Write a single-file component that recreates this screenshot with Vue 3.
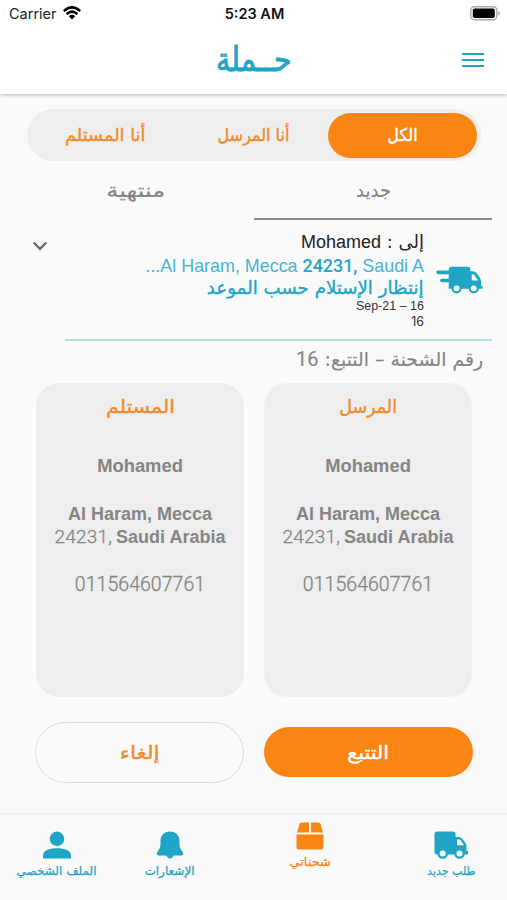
<script setup>
import { ref } from 'vue'

const filters = [
  { id: 'all', label: 'الكل' },
  { id: 'sender', label: 'أنا المرسل' },
  { id: 'receiver', label: 'أنا المستلم' },
]
const activeFilter = ref('all')

const tabs = [
  { id: 'new', label: 'جديد' },
  { id: 'done', label: 'منتهية' },
]
const activeTab = ref('new')

const parties = [
  { id: 'card-from', title: 'المرسل' },
  { id: 'card-to', title: 'المستلم' },
]
</script>

<template>
  <div class="screen">
    <header class="header">
      <div class="status">
        <div class="carrier">
          <span>Carrier</span>
          <svg class="wifi" viewBox="0 0 18 14">
            <path d="M0.8 5.2Q9-2.5 17.2 5.2M3.6 8.1Q9 3.2 14.4 8.1" fill="none" stroke="#000" stroke-width="2.5" />
            <path d="M5.9 10.2Q9 7.4 12.1 10.2L9 13.6Z" />
          </svg>
        </div>
        <span class="clock">5:23 AM</span>
        <svg class="battery" viewBox="0 0 30 15">
          <rect x="0.8" y="0.8" width="26" height="13" rx="3.5" fill="#fff" stroke="#aaa" stroke-width="1.4" />
          <rect x="2.8" y="2.6" width="22" height="9.4" rx="1.8" />
          <path d="M28.3 5Q30 5.4 30 7.3T28.3 9.7Z" fill="#aaa" />
        </svg>
      </div>
      <div class="brand-row">
        <h1 class="brand">حــملة</h1>
        <button class="menu" aria-label="القائمة"><i></i><i></i><i></i></button>
      </div>
    </header>

    <main class="content">
      <div class="filters">
        <button
          v-for="f in filters" :key="f.id" class="filter"
          :class="[f.id, { on: f.id === activeFilter }]" @click="activeFilter = f.id"
        ><span>{{ f.label }}</span></button>
      </div>

      <div class="tabs">
        <button
          v-for="t in tabs" :key="t.id" class="tab"
          :class="[t.id, { on: t.id === activeTab }]" @click="activeTab = t.id"
        ><span>{{ t.label }}</span></button>
      </div>

      <section class="shipment">
        <svg class="fast-truck" viewBox="0 0 48 30">
          <path d="M2 7.200H16M6 15.600H18" stroke="#1fa6c6" stroke-width="3.600" stroke-linecap="round" />
          <path d="M16 1.500H32.500Q35 1.500 35 4V6H38Q40 6 41.500 8L45 13Q46 15 46 17V21H47.500V24H13V4.500Q13 1.500 16 1.500Z" fill="#1fa6c6" />
          <path d="M36.500 9H38.500L43 15.500H36.500Z" fill="#fafafa" />
          <g fill="#1fa6c6"><circle cx="21" cy="23.500" r="5.200" /><circle cx="38.500" cy="23.500" r="5.200" /></g>
          <g fill="#fafafa"><circle cx="21" cy="23.500" r="3" /><circle cx="38.500" cy="23.500" r="3" /></g>
        </svg>
        <div class="info">
          <p class="recipient"><span>إلى : <b>Mohamed</b></span></p>
          <p class="address"><span>Al Haram, Mecca <b>24231,</b> Saudi A...</span></p>
          <p class="state"><span>إنتظار الإستلام حسب الموعد</span></p>
          <p class="date"><span>16 – Sep-21</span></p>
          <p class="num"><span>16</span></p>
        </div>
        <svg class="chevron" viewBox="0 0 16 10"><path d="M1.600 1.500L8 7.800L14.400 1.500" fill="none" stroke="#666" stroke-width="2.300" /></svg>
      </section>
      <hr class="rule">

      <h2 class="tracking"><span>رقم الشحنة – التتبع: <b>16</b></span></h2>

      <div class="cards">
        <article v-for="p in parties" :key="p.id" class="card" :class="p.id">
          <h3><span>{{ p.title }}</span></h3>
          <p class="name"><span>Mohamed</span></p>
          <p class="line1"><span>Al Haram, Mecca</span></p>
          <p class="line2" dir="ltr"><span class="digits zip">24231,</span><span class="country">Saudi Arabia</span></p>
          <p class="phone"><span class="digits">011564607761</span></p>
        </article>
      </div>

      <div class="actions">
        <button class="track"><span>التتبع</span></button>
        <button class="cancel"><span>إلغاء</span></button>
      </div>
    </main>

    <nav class="nav">
      <a class="item order">
        <svg viewBox="0 0 34 28">
          <path d="M3 .5H19Q21.500 .5 21.500 3V6H25Q27 6 28.300 7.700L31.500 12Q32.500 13.500 32.500 15.500V20H34V23.500H3Q.5 23.500 .5 21V3Q.5 .5 3 .5Z" fill="#1fa6c6" />
          <path d="M23 8.500H26L30 14.300H23Z" fill="#fafafa" />
          <g fill="#1fa6c6"><circle cx="8.700" cy="22.500" r="5.300" /><circle cx="25.500" cy="22.500" r="5.300" /></g>
          <g fill="#fafafa"><circle cx="8.700" cy="22.500" r="3" /><circle cx="25.500" cy="22.500" r="3" /></g>
        </svg>
        <span>طلب جديد</span>
      </a>
      <a class="item mine">
        <svg viewBox="0 0 28 28">
          <path d="M5.500 .5H13V10.500H1L3.500 2Q4 .5 5.500 .5ZM15 .5H22.500Q24 .5 24.500 2L27 10.500H15ZM.5 12.500H27.500V25Q27.500 27.500 25 27.500H3Q.5 27.500 .5 25Z" fill="#f98513" />
        </svg>
        <span>شحناتي</span>
      </a>
      <a class="item alerts">
        <svg viewBox="0 0 28 28">
          <path d="M14 .5C7.500 .5 4.500 5 4.500 10V14Q4.500 17 2 20L.8 22Q.5 24.500 2.500 24.500H10.200Q11.500 27.500 14 27.500T17.800 24.500H25.500Q27.500 24.500 27.200 22L26 20Q23.500 17 23.500 14V10C23.500 5 20.500 .5 14 .5Z" fill="#1fa6c6" />
        </svg>
        <span>الإشعارات</span>
      </a>
      <a class="item profile">
        <svg viewBox="0 0 28 28">
          <circle cx="14" cy="7.800" r="7.300" fill="#1fa6c6" />
          <path d="M0 27.500V24.500C0 19.500 6 17.300 14 17.300S28 19.500 28 24.500V27.500Z" fill="#1fa6c6" />
        </svg>
        <span>الملف الشخصي</span>
      </a>
    </nav>
  </div>
</template>

<style>
body { margin: 0; background: #fafafa; }
</style>

<style scoped>
.screen {
  width: 507px; height: 900px; box-sizing: border-box; overflow: hidden;
  display: flex; flex-direction: column; direction: rtl;
  background: #fafafa; color: #858585;
  font-family: "DejaVu Sans", sans-serif;
}
.screen * { box-sizing: border-box; }
button { border: 0; padding: 0; background: none; font: inherit; color: inherit; }
h1, h2, h3, p { margin: 0; font-weight: 400; white-space: nowrap; }
span { display: inline-block; white-space: nowrap; }

.header { height: 94px; background: #fff; box-shadow: 0 1px 4px rgba(0, 0, 0, .28); flex: none; }
.status {
  height: 27px; direction: ltr; display: grid; grid-template-columns: 1fr auto 1fr; align-items: center;
  padding: 0 7px 0 9px; font-family: Inter, sans-serif; font-size: 14.5px; color: #222;
}
.carrier { display: flex; align-items: center; gap: 6px; }
.wifi { width: 18px; height: 14px; margin-top: -2px; }
.clock { font-weight: 600; font-size: 14.5px; color: #111; }
.battery { width: 30px; height: 15px; justify-self: end; }
.brand-row { height: 66px; display: grid; grid-template-columns: 1fr auto 1fr; align-items: center; padding: 0 23px; }
.brand { grid-column: 2; font-size: 30px; line-height: 56px; color: #1fa6c6; -webkit-text-stroke: .8px; transform: scale(.95, 1.12); }
.menu { grid-column: 1; grid-row: 1; justify-self: start; width: 22px; display: flex; flex-direction: column; gap: 4px; }
.menu i { height: 2px; background: #1fa6c6; }

.content { flex: 1; min-height: 0; padding-top: 15px; }
.filters {
  width: 454px; height: 52px; margin-right: 26px; padding: 4px; border-radius: 26px; background: #eee;
  display: grid; grid-template-columns: 149px 149px 1fr; color: #f08a2c; font-size: 16px;
}
.filters, .state, .card h3, .actions { -webkit-text-stroke: .35px; }
.tabs, .tracking { -webkit-text-stroke: .15px; }
.filter { height: 45px; border-radius: 23px; }
.filter.on { background: #f98513; color: #fff; }
.filter span { transform: translateY(-1px) scaleY(1.1); }
.receiver span { transform: translateY(-1px) scale(1.11, 1.1); }

.tabs { height: 59px; margin: 0 15px; display: grid; grid-template-columns: 1fr 1fr; font-size: 17px; }
.tab { border-bottom: 2px solid transparent; }
.tab.on { border-color: #8b8b8b; }
.new span { transform: translateX(1px) scale(1.06, 1.1); }
.done span { transform: translateX(1px) scale(1.42, 1.15); }

.shipment { height: 119px; padding: 10px 24px 0 32px; display: flex; align-items: flex-start; }
.fast-truck { width: 47px; height: 30px; margin-top: 35px; margin-right: 0; flex: none; }
.info { flex: 1; padding-right: 12px; }
.info span { transform-origin: right center; }
.recipient { height: 24px; line-height: 24px; font-size: 18px; color: #222; }
.recipient b, .address, .date { font-family: "Liberation Sans", "DejaVu Sans", sans-serif; font-weight: 400; }
.address { height: 23px; line-height: 23px; font-size: 17.9px; color: #48b5d0; }
.address b { font-family: Roboto, sans-serif; font-weight: 500; color: #1fa6c6; }
.state { height: 22px; line-height: 22px; font-size: 17px; color: #1fa6c6; }
.state span { transform: scale(1.07, 1.08); }
.date, .num { height: 15px; line-height: 15px; font-size: 12.5px; color: #333; }
.num { font-family: Inter, sans-serif; }
.chevron { width: 16px; height: 10px; margin-top: 11px; flex: none; }
.rule { width: 427px; height: 2px; margin: 0 15px 0 0; border: 0; background: #b5e0e8; }

.tracking { height: 42px; line-height: 38px; padding-right: 24px; font-size: 18px; }
.tracking span { transform: scale(1.05, 1.06); transform-origin: right center; }
.tracking b { font-family: Roboto, sans-serif; font-weight: 400; font-size: 19px; }

.cards { display: grid; grid-template-columns: 208px 208px; gap: 20px; margin-right: 35px; }
.card { height: 314px; border-radius: 24px; background: #eee; padding-top: 11px; display: flex; flex-direction: column; align-items: center; }
.card h3 { height: 24px; line-height: 24px; font-size: 17px; color: #f08a2c; }
.card-from h3 span { transform: scale(1.03, 1.1); }
.card-to h3 span { transform: scale(1.21, 1.1); }
.card p { height: 24px; line-height: 24px; font-family: "Liberation Sans", sans-serif; font-weight: 700; font-size: 18px; }
.card .name { margin-top: 36px; }
.name span { transform: scaleX(1.02); }
.card .line1 { margin-top: 24px; }
.card .line2 { display: flex; gap: 4px; margin-top: -1px; }
.card .phone { margin-top: 24px; }
.card .digits { font-family: Roboto, sans-serif; font-weight: 300; font-size: 19.5px; letter-spacing: .05px; -webkit-text-stroke: .3px; }
.card .zip { font-size: 19px; letter-spacing: .2px; }

.actions { display: grid; grid-template-columns: 209px 209px; gap: 20px; align-items: center; margin: 25px 34px 0 0; height: 61px; font-size: 17px; }
.track { height: 50px; border-radius: 25px; background: #f98513; color: #fff; margin-bottom: 1px; }
.cancel { height: 61px; border-radius: 31px; border: 1px solid #ddd; color: #f08a2c; }
.track span { transform: scale(1.22, 1.1); }
.cancel span { transform: translateY(-1px) scale(1.27, 1.1); }

.nav { flex: none; height: 87px; border-top: 2px solid #f1f1f1; display: grid; grid-template-columns: 113px 168px 113px 113px; }
.item { display: flex; flex-direction: column; align-items: center; color: #1fa6c6; font-size: 12px; padding-top: 16px; -webkit-text-stroke: .25px; }
.item span { line-height: 24px; }
.item svg { height: 28px; width: 28px; }
.order svg { width: 34px; }
.order span { transform: translateX(1px) scaleX(.92); }
.mine { color: #f98513; padding-top: 7px; }
.mine span { transform: scaleX(1.08); }
</style>
